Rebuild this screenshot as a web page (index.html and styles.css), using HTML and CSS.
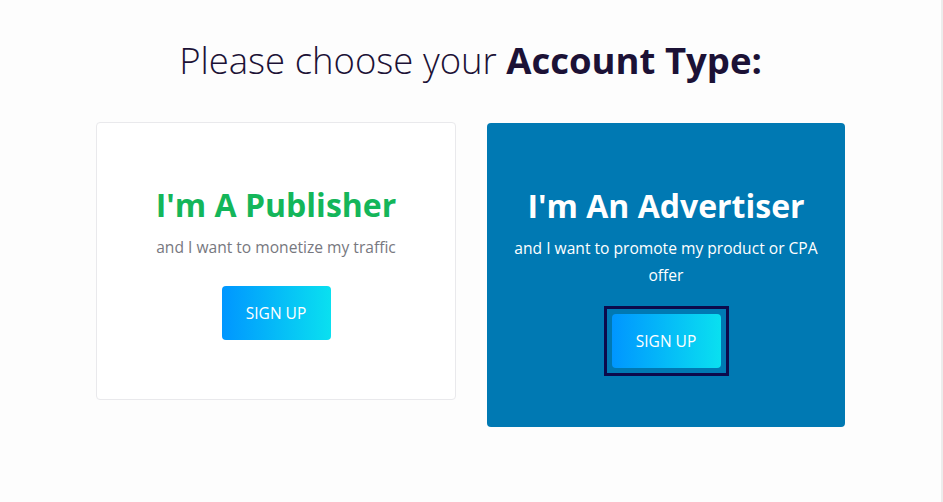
FILE: index.html
```html
<!DOCTYPE html>
<html lang="en">
<head>
  <meta charset="UTF-8">
  <meta name="viewport" content="width=device-width, initial-scale=1.0">
  <title>Choose Account Type</title>
  <link rel="stylesheet" href="styles.css">
</head>
<body>
  <div class="page">
    <h1 class="page-title">Please choose your <strong>Account Type:</strong></h1>
    <div class="account-types">
      <div class="account-card publisher">
        <h2>I'm A Publisher</h2>
        <p>and I want to monetize my traffic</p>
        <button class="signup-btn">Sign Up</button>
      </div>
      <div class="account-card advertiser">
        <h2>I'm An Advertiser</h2>
        <p>and I want to promote my product or CPA offer</p>
        <button class="signup-btn focused">Sign Up</button>
      </div>
    </div>
  </div>
</body>
</html>
```

FILE: styles.css
```css
body {
  margin: 0;
  background: #fdfdfd;
  font-family: 'Open Sans', 'Noto Sans', sans-serif;
  height: 100vh;
  overflow: hidden;
}
.page {
  height: 100%;
  border-right: 2px solid #ececec;
  box-sizing: border-box;
  padding-top: 39px;
}
.page-title {
  margin: 0 0 39px;
  text-align: center;
  font-size: 36.5px;
  font-weight: 300;
  line-height: 1.2;
  color: #1c1236;
}
.page-title strong {
  font-weight: 700;
}
.account-types {
  display: grid;
  grid-template-columns: 360px 358px;
  gap: 31px;
  width: 749px;
  margin: 0 auto;
  align-items: start;
}
.account-card {
  border-radius: 4px;
  padding: 63px 22px 59px;
  text-align: center;
}
.account-card h2 {
  margin: 0;
  font-size: 32px;
  font-weight: 700;
  line-height: 1.2;
}
.account-card p {
  margin: 10px 0 25px;
  font-size: 15.6px;
  line-height: 27px;
}
.publisher {
  background: #fff;
  border: 1px solid #e9e9ec;
}
.publisher h2 {
  color: #14b65a;
}
.publisher p {
  color: #777880;
}
.advertiser {
  margin-top: 1px;
  padding-top: 64px;
  background: #0079b3;
  color: #fff;
}
.signup-btn {
  position: relative;
  width: 109px;
  height: 54px;
  border: none;
  border-radius: 4px;
  background: linear-gradient(to right, #0096ff, #0ae0f0);
  color: #fff;
  font-family: inherit;
  font-size: 15.5px;
  text-transform: uppercase;
  cursor: pointer;
}
.signup-btn.focused::after {
  content: "";
  position: absolute;
  top: -8px;
  left: -8px;
  right: -8px;
  bottom: -8px;
  border: 3px solid #0c0a4c;
}
```
